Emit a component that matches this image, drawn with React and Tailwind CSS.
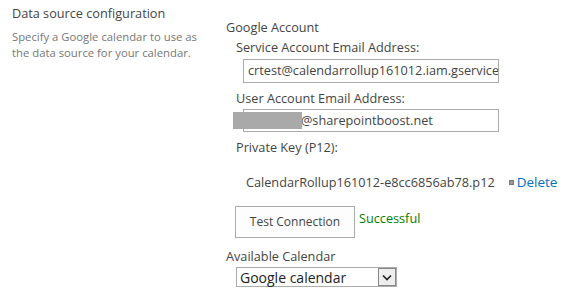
export default function App() {
  return (
    <div className="w-[567px] h-[296px] bg-white flex text-[12.7px] text-[#444]" style={{ fontFamily: '"Segoe UI", "Open Sans", sans-serif' }}>
      <div className="w-[226px] pl-3 pt-[4px] shrink-0">
        <div className="text-[12.7px] text-[#444] leading-[18px]">Data source configuration</div>
        <div className="mt-[7px] text-[11.3px] text-[#777] leading-[16px] w-[200px]">
          Specify a Google calendar to use as the data source for your calendar.
        </div>
      </div>
      <div className="flex flex-col pt-[18px]">
        <div className="leading-[18px]">Google Account</div>
        <div className="pl-[10px] mt-[2px] leading-[18px]">Service Account Email Address:</div>
        <div className="ml-[17px] mt-[3px] w-[256px] h-[24px] border border-[#ababab] px-[4px] flex items-center overflow-hidden whitespace-nowrap">
          crtest@calendarrollup161012.iam.gservice
        </div>
        <div className="pl-[10px] mt-[6px] leading-[18px]">User Account Email Address:</div>
        <div className="ml-[17px] mt-[2px] w-[256px] h-[23px] border border-[#ababab] flex items-center whitespace-nowrap relative">
          <span className="absolute left-[-11px] top-[2px] w-[69px] h-[17px] bg-[#a9a9a9]" />
          <span className="pl-[57px]">@sharepointboost.net</span>
        </div>
        <div className="pl-[10px] mt-[6px] leading-[18px]">Private Key (P12):</div>
        <div className="flex items-center mt-[17px] pl-[20px] leading-[18px]">
          <span>CalendarRollup161012-e8cc6856ab78.p12</span>
          <span className="ml-[14px] w-[5px] h-[5px] bg-[#9a9a9a] border border-[#777]" />
          <span className="ml-[3px] text-[#0072c6] text-[13.5px]">Delete</span>
        </div>
        <div className="flex items-start mt-[15px] ml-[9px]">
          <button className="w-[120px] h-[32px] border border-[#ababab] bg-[#fdfdfd] text-[12px] text-[#444]">Test Connection</button>
          <span className="ml-[4px] mt-[3px] text-[#008000] leading-[18px]">Successful</span>
        </div>
        <div className="mt-[9px] leading-[18px]">Available Calendar</div>
        <div className="ml-[10px] mt-[2px] w-[161px] h-[20px] border border-[#ababab] flex items-center text-[#222]">
          <span className="flex-1 pl-[3px] text-[14px]">Google calendar</span>
          <span className="w-[18px] h-[18px] border border-[#888] bg-[#eee] flex items-center justify-center">
            <svg width="10" height="7" viewBox="0 0 10 7"><path d="M1 1.5 L5 5.5 L9 1.5" fill="none" stroke="#222" strokeWidth="1.6" /></svg>
          </span>
        </div>
      </div>
    </div>
  );
}
